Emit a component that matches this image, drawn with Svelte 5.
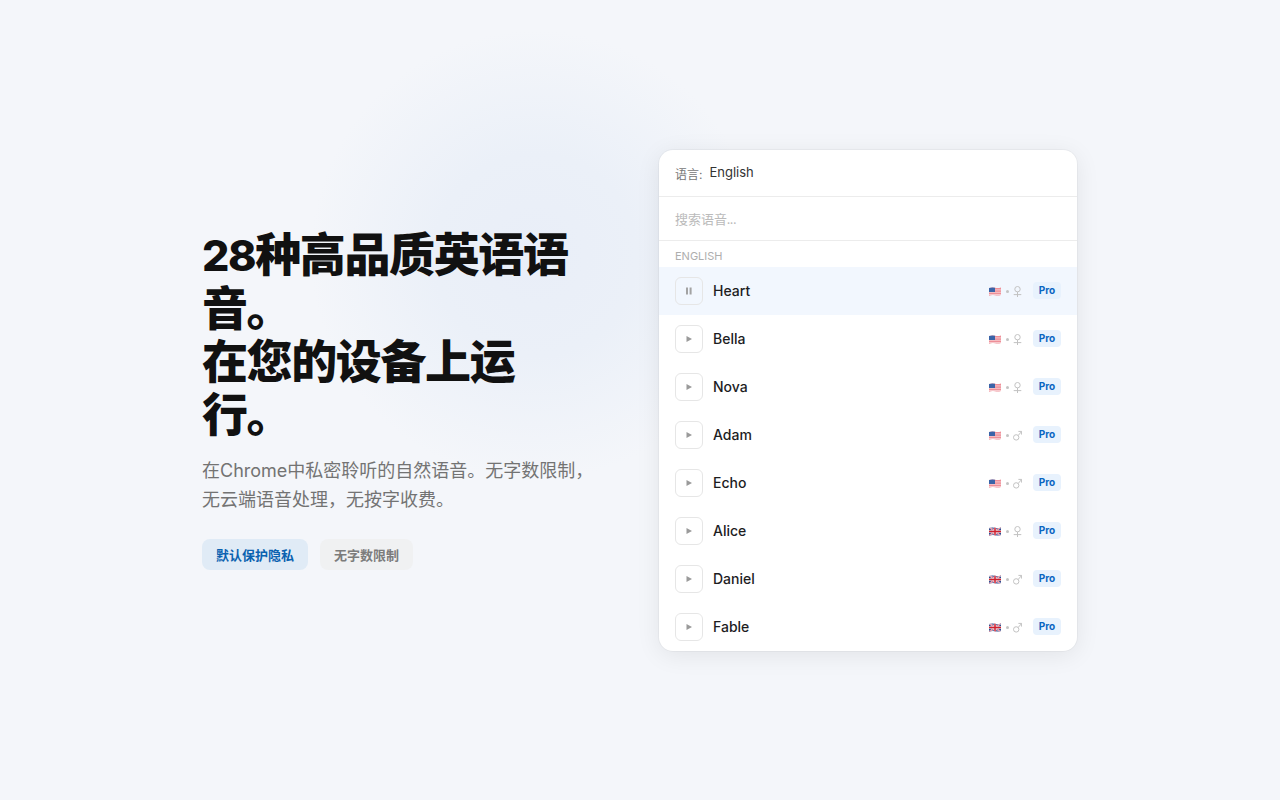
<script>
  const voices = [
    { name: 'Heart', flag: 'us', g: 'f', playing: true },
    { name: 'Bella', flag: 'us', g: 'f' },
    { name: 'Nova', flag: 'us', g: 'f' },
    { name: 'Adam', flag: 'us', g: 'm' },
    { name: 'Echo', flag: 'us', g: 'm' },
    { name: 'Alice', flag: 'gb', g: 'f' },
    { name: 'Daniel', flag: 'gb', g: 'm' },
    { name: 'Fable', flag: 'gb', g: 'm' }
  ];
  const wave = 'M0 1 Q3 0 6 0.8 T12 0.4 V8 Q9 8.9 6 8.2 T0 8.8 Z';
</script>

<main class="page">
  <div class="glow"></div>
  <section class="intro">
    <h1><span class="num">28</span><span>种高品质英语语</span><span>音。</span><br /><span>在您的设备上运</span><span>行。</span></h1>
    <p>在Chrome中私密聆听的自然语音。无字数限制，无云端语音处理，无按字收费。</p>
    <div class="tags">
      <span class="tag blue">默认保护隐私</span>
      <span class="tag gray">无字数限制</span>
    </div>
  </section>

  <section class="panel">
    <header class="lang"><span class="lang-label">语言:</span><span class="lang-value">English</span></header>
    <div class="search">搜索语音...</div>
    <div class="group">ENGLISH</div>
    {#each voices as v}
      <div class="row" class:active={v.playing}>
        <span class="play">
          {#if v.playing}
            <svg width="8" height="8" viewBox="0 0 8 8"><rect x="1" y="0.5" width="2" height="7" fill="#a3a3a3" /><rect x="4.6" y="0.5" width="2" height="7" fill="#a3a3a3" /></svg>
          {:else}
            <svg width="8" height="8" viewBox="0 0 8 8"><path d="M1.5 1 L7 4 L1.5 7 Z" fill="#9a9a9a" /></svg>
          {/if}
        </span>
        <span class="name">{v.name}</span>
        <span class="meta">
          <svg class="flag" width="12" height="9" viewBox="0 0 12 9">
            <clipPath id="wave-{v.name}"><path d={wave} /></clipPath>
            <g clip-path="url(#wave-{v.name})">
              {#if v.flag === 'us'}
                <rect width="12" height="9" fill="#ee8f98" />
                <rect y="2.4" width="12" height="1" fill="#f7c9cd" />
                <rect y="4.8" width="12" height="1" fill="#f7c9cd" />
                <rect y="7" width="12" height="1" fill="#f7c9cd" />
                <rect width="6" height="5" fill="#3a64a8" />
              {:else}
                <rect width="12" height="9" fill="#2f4c8f" />
                <path d="M0 0 L12 9 M12 0 L0 9" stroke="#f1dfe2" stroke-width="1.8" />
                <path d="M0 0 L12 9 M12 0 L0 9" stroke="#d8405f" stroke-width="0.7" />
                <path d="M6 0 V9 M0 4.5 H12" stroke="#f5e8ea" stroke-width="2.6" />
                <path d="M6 0 V9 M0 4.5 H12" stroke="#d0202f" stroke-width="1.5" />
              {/if}
            </g>
          </svg>
          <i class="dot"></i>
          {#if v.g === 'f'}
            <svg class="sex" width="9" height="11" viewBox="0 0 9 11" fill="none" stroke="#c2c2c2" stroke-width="1"><circle cx="4.5" cy="3.2" r="2.7" /><path d="M4.5 5.9 V11 M0.7 8.6 H8.3" /></svg>
          {:else}
            <svg class="sex" width="9" height="11" viewBox="0 0 9 11" fill="none" stroke="#c2c2c2" stroke-width="1"><circle cx="3.2" cy="7.4" r="2.7" /><path d="M5.1 5.5 L8.6 1.6 M5.4 1.4 H8.6 V4.6" /></svg>
          {/if}
        </span>
        <span class="pro">Pro</span>
      </div>
    {/each}
  </section>
</main>

<style>
  :global(body) {
    margin: 0;
    background: #f4f6fa;
  }
  .page {
    position: relative;
    height: 800px;
    box-sizing: border-box;
    padding-right: 1px;
    display: flex;
    justify-content: center;
    align-items: center;
    gap: 56px;
    overflow: hidden;
    font-family: Inter, "Noto Sans CJK SC", sans-serif;
  }
  .glow {
    position: absolute;
    left: 310px;
    top: 30px;
    width: 450px;
    height: 450px;
    border-radius: 50%;
    background: radial-gradient(circle closest-side, #e9eef8 0%, #ebf0f8 45%, rgba(244, 246, 250, 0) 100%);
  }
  .intro {
    position: relative;
    width: 401px;
    padding-bottom: 1px;
  }
  h1 {
    margin: -1px 0 1px;
    font-size: 46px;
    line-height: 53px;
    font-weight: 800;
    letter-spacing: -0.03em;
    color: #111;
  }
  .num {
    font-size: 43px;
  }
  p {
    margin: 15px 0 0;
    width: 392px;
    font-size: 18px;
    line-height: 29px;
    color: #737373;
  }
  .tags {
    display: flex;
    gap: 12px;
    margin-top: 25px;
  }
  .tag {
    font-size: 13px;
    font-weight: 600;
    line-height: 30px;
    padding: 1px 14px 0;
    border-radius: 8px;
  }
  .blue {
    background: #e0ebf6;
    color: #0a62b0;
  }
  .gray {
    background: #f0f1f2;
    color: #7c7c7c;
  }
  .panel {
    position: relative;
    width: 418px;
    background: #fff;
    border-radius: 14px;
    box-shadow: 0 0 0 1px rgba(0, 0, 0, 0.03), 0 4px 24px rgba(0, 0, 0, 0.08);
    overflow: hidden;
  }
  .lang {
    height: 46px;
    padding: 0 16px;
    display: flex;
    align-items: center;
    gap: 7px;
    border-bottom: 1px solid #ececec;
  }
  .lang-label {
    font-size: 12px;
    color: #777;
    margin-top: 1px;
  }
  .lang-value {
    font-size: 13px;
    color: #333;
    margin-top: -1px;
  }
  .search {
    height: 43px;
    line-height: 44px;
    padding: 0 16px;
    font-size: 13px;
    font-family: Lato, "Noto Sans CJK SC", sans-serif;
    color: #bbb;
    border-bottom: 1px solid #ececec;
  }
  .group {
    height: 26px;
    line-height: 31px;
    padding: 0 16px;
    font-size: 11px;
    color: #aeaeae;
  }
  .row {
    height: 48px;
    padding: 0 16px;
    display: flex;
    align-items: center;
  }
  .row.active {
    background: #f2f7fe;
  }
  .play {
    box-sizing: border-box;
    width: 28px;
    height: 28px;
    border: 1px solid #e6e6e6;
    border-radius: 6px;
    display: flex;
    align-items: center;
    justify-content: center;
    background: #fff;
  }
  .active .play {
    background: #f2f7fe;
  }
  .name {
    margin-left: 10px;
    font-size: 14px;
    font-weight: 500;
    color: #1d1d1f;
    flex: 1;
  }
  .meta {
    display: flex;
    align-items: center;
    margin-top: 1px;
  }
  .dot {
    width: 3px;
    height: 3px;
    border-radius: 50%;
    background: #c4c4c4;
    margin: 0 4px 0 5px;
  }
  .pro {
    margin-left: 11px;
    margin-bottom: 1px;
    font-size: 10px;
    font-weight: 700;
    line-height: 17px;
    width: 28px;
    text-align: center;
    border-radius: 4px;
    background: #e8f2fd;
    color: #0a66c2;
  }
</style>
